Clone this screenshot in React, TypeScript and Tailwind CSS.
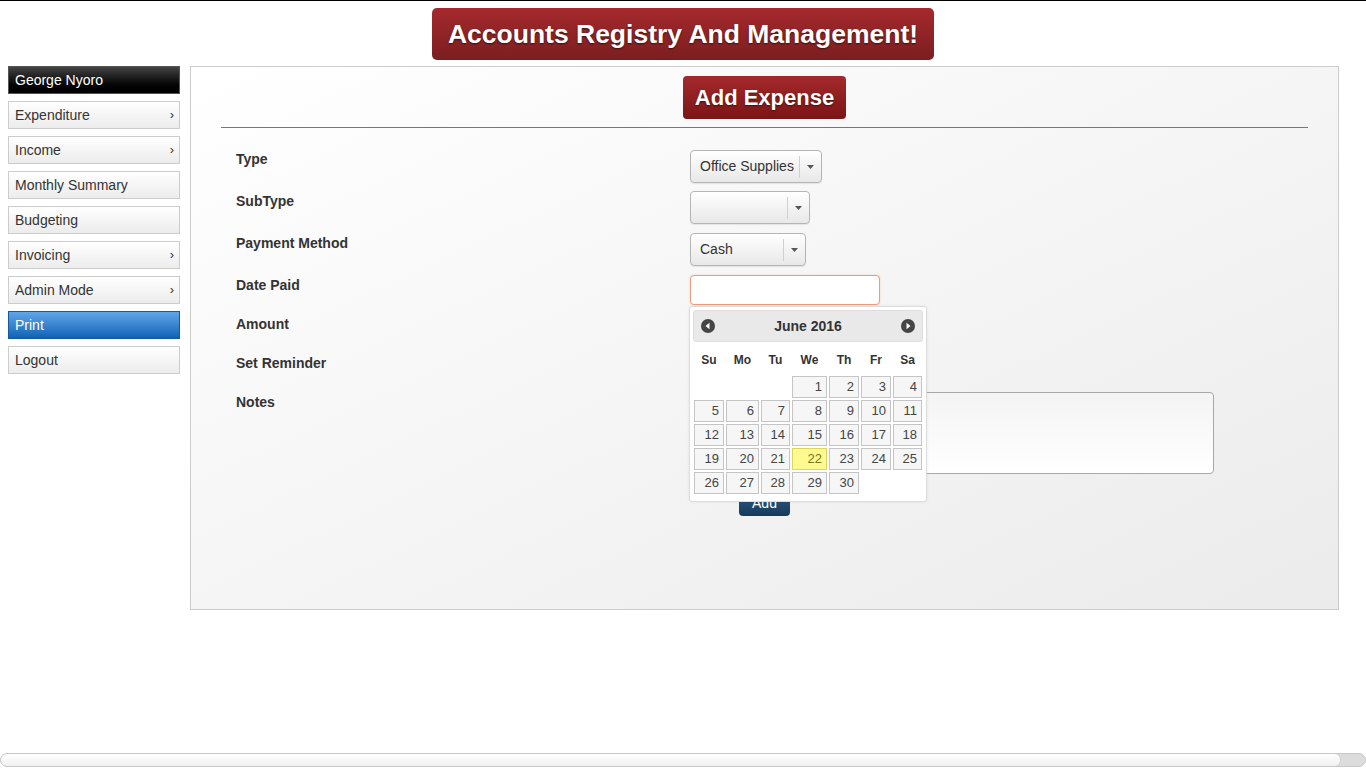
import React from 'react';

const menu = [
  { label: 'Expenditure', arrow: true },
  { label: 'Income', arrow: true },
  { label: 'Monthly Summary', arrow: false },
  { label: 'Budgeting', arrow: false },
  { label: 'Invoicing', arrow: true },
  { label: 'Admin Mode', arrow: true },
];

const colWidths = [30, 33, 29, 35, 30, 30, 29];
const dayNames = ['Su', 'Mo', 'Tu', 'We', 'Th', 'Fr', 'Sa'];

function Select({ value, width }: { value: string; width: number }) {
  return (
    <div
      className="flex items-center h-[33px] rounded-[4px] border border-[#b5b5b5] bg-gradient-to-b from-white to-[#e8e8e8] text-[14px] text-[#333] shadow-[0_1px_1px_rgba(0,0,0,0.08)]"
      style={{ width }}
    >
      <span className="flex-1 pl-[9px] truncate">{value}</span>
      <span className="h-[22px] border-l border-[#d0d0d0]" />
      <span className="w-[21px] flex justify-center">
        <svg width="7" height="4" viewBox="0 0 7 4">
          <path d="M0 0h7L3.5 4z" fill="#555" />
        </svg>
      </span>
    </div>
  );
}

function NavCircle({ dir }: { dir: 'prev' | 'next' }) {
  return (
    <svg width="14" height="14" viewBox="0 0 14 14">
      <circle cx="7" cy="7" r="7" fill="#454545" />
      {dir === 'prev' ? <path d="M8.5 3.8v6.4L4.5 7z" fill="#fff" /> : <path d="M5.5 3.8v6.4L9.5 7z" fill="#fff" />}
    </svg>
  );
}

function DatePicker() {
  const cells: (number | null)[] = [null, null, null];
  for (let d = 1; d <= 30; d++) cells.push(d);
  const rows: (number | null)[][] = [];
  for (let i = 0; i < cells.length; i += 7) rows.push(cells.slice(i, i + 7));

  return (
    <div className="absolute left-[-1px] top-[31px] w-[238px] h-[196px] bg-white border border-[#dddddd] rounded-[3px] p-[3px] shadow-[0_0_3px_rgba(0,0,0,0.08)] z-10">
      <div className="h-[32px] bg-[#e9e9e9] border border-[#dddddd] rounded-[3px] flex items-center justify-between px-[7px]">
        <NavCircle dir="prev" />
        <span className="font-bold text-[14px] text-[#333]">June 2016</span>
        <NavCircle dir="next" />
      </div>
      <div className="flex gap-[2px] mt-[2px] h-[32px] items-center px-px">
        {dayNames.map((n, i) => (
          <div key={n} className="text-center font-bold text-[12px] text-[#333]" style={{ width: colWidths[i] }}>
            {n}
          </div>
        ))}
      </div>
      <div className="flex flex-col gap-[2px] px-px">
        {rows.map((row, ri) => (
          <div key={ri} className="flex gap-[2px]">
            {row.map((d, ci) =>
              d === null ? (
                <div key={ci} style={{ width: colWidths[ci] }} className="h-[22px]" />
              ) : (
                <div
                  key={ci}
                  style={{ width: colWidths[ci] }}
                  className={
                    'h-[22px] border text-right pr-[4px] text-[13px] leading-[20px] ' +
                    (d === 22
                      ? 'bg-[#fffa90] border-[#dad55e] text-[#777620]'
                      : 'bg-[#f6f6f6] border-[#c5c5c5] text-[#454545]')
                  }
                >
                  {d}
                </div>
              )
            )}
          </div>
        ))}
      </div>
    </div>
  );
}

export default function App() {
  return (
    <div className="min-h-screen bg-white border-t border-black font-['Liberation_Sans',Arial,sans-serif] flex flex-col">
      <div className="flex justify-center pt-[7px]">
        <div className="w-[502px] h-[52px] rounded-[5px] bg-gradient-to-b from-[#a5292c] to-[#7b1e21] flex items-center justify-center pt-[2px] text-white font-bold text-[26.5px] [text-shadow:0_1px_2px_rgba(0,0,0,0.6)]">
          Accounts Registry And Management!
        </div>
      </div>

      <div className="flex gap-[10px] px-[8px] mt-[6px] pr-[27px]">
        <div className="w-[172px] flex flex-col gap-[7px]">
          <div className="h-[28px] border border-[#555] bg-gradient-to-b from-[#444] to-black text-white text-[14px] leading-[26px] pl-[6px]">
            George Nyoro
          </div>
          {menu.map((m) => (
            <div
              key={m.label}
              className="h-[28px] border border-[#cccccc] bg-gradient-to-b from-white to-[#ececec] text-[#333] text-[14px] leading-[26px] pl-[6px] pr-[5px] flex justify-between"
            >
              <span>{m.label}</span>
              {m.arrow && <span className="text-[13px] text-[#333]">›</span>}
            </div>
          ))}
          <div className="h-[28px] border border-[#145b9e] bg-gradient-to-b from-[#5fa6e8] to-[#0a63b6] text-white text-[14px] leading-[26px] pl-[6px]">
            Print
          </div>
          <div className="h-[28px] border border-[#cccccc] bg-gradient-to-b from-white to-[#ececec] text-[#333] text-[14px] leading-[26px] pl-[6px]">
            Logout
          </div>
        </div>

        <div className="flex-1 h-[544px] border border-[#cccccc] bg-gradient-to-br from-white to-[#ebebeb] px-[30px] pt-[9px]">
          <div className="flex justify-center">
            <div className="w-[163px] h-[43px] rounded-[4px] bg-gradient-to-b from-[#a5292c] to-[#7b1416] flex items-center justify-center text-white font-bold text-[22px] [text-shadow:0_1px_2px_rgba(0,0,0,0.5)]">
              Add Expense
            </div>
          </div>
          <div className="mt-[8px] border-t border-[#777]" />

          <div className="pl-[15px] mt-[22px] grid grid-cols-[454px_1fr] text-[14px] text-[#333]">
            <div className="h-[42px] font-bold leading-[18px]">Type</div>
            <div className="h-[42px]">
              <Select value="Office Supplies" width={132} />
            </div>
            <div className="h-[42px] font-bold leading-[18px]">SubType</div>
            <div className="h-[42px] -mt-px">
              <Select value="" width={120} />
            </div>
            <div className="h-[42px] font-bold leading-[18px]">Payment Method</div>
            <div className="h-[42px] -mt-px">
              <Select value="Cash" width={116} />
            </div>
            <div className="h-[39px] font-bold leading-[18px]">Date Paid</div>
            <div className="h-[39px]">
              <div className="relative w-[190px] -mt-px">
                <div className="h-[30px] w-[190px] rounded-[4px] border border-[#ee9a7e] bg-white shadow-[0_0_2px_rgba(238,120,80,0.35)]" />
                <DatePicker />
              </div>
            </div>
            <div className="h-[39px] font-bold leading-[18px]">Amount</div>
            <div className="h-[39px]">
              <div className="h-[30px] w-[190px] rounded-[4px] border border-[#aaa] bg-white" />
            </div>
            <div className="h-[39px] font-bold leading-[18px]">Set Reminder</div>
            <div className="h-[39px]" />
            <div className="font-bold leading-[18px]">Notes</div>
            <div className="-mt-px">
              <div className="h-[82px] w-[524px] rounded-[4px] border border-[#a8a8a8] bg-gradient-to-b from-[#f4f4f4] to-white" />
              <div className="ml-[49px] mt-[16px] w-[51px] h-[26px] rounded-[4px] bg-gradient-to-b from-[#2e5f88] to-[#173a5a] text-white text-[14px] flex items-center justify-center">
                Add
              </div>
            </div>
          </div>
        </div>
      </div>

      <div className="mt-auto mb-px h-[14px] rounded-full border border-[#c8c8c8] bg-[#dcdcdc] flex overflow-hidden">
        <div className="flex-1 rounded-full bg-gradient-to-b from-white to-[#f0f0f0] border-r border-[#d0d0d0]" />
        <div className="w-[24px]" />
      </div>
    </div>
  );
}
